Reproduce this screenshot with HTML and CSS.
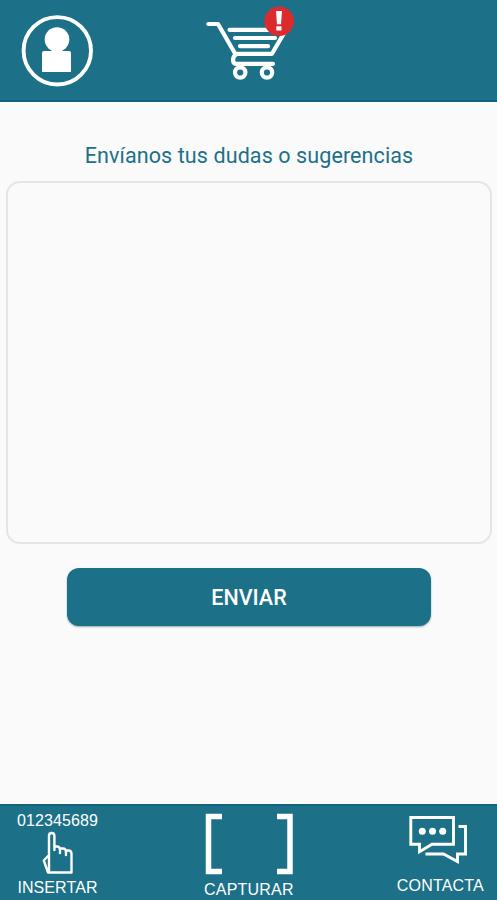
FILE: index.html
```html
<!DOCTYPE html>
<html lang="es">
<head>
<meta charset="utf-8">
<title>Contacta</title>
<link rel="stylesheet" href="styles.css">
</head>
<body>
<header class="topbar">
  <svg class="icon-user" width="72" height="72" viewBox="21 15 72 72">
    <circle cx="57.3" cy="50.8" r="33.700" fill="none" stroke="#fff" stroke-width="3.9"/>
    <circle cx="57" cy="39.5" r="12.3" fill="#fff"/>
    <path d="M52 48h10v3h7q2 0 2 2v19H42V53q0-2 2-2h8z" fill="#fff"/>
  </svg>
  <svg class="icon-cart" width="90" height="78" viewBox="205 5 90 78">
    <g fill="none" stroke="#fff" stroke-width="4.2" stroke-linecap="round" stroke-linejoin="round">
      <path d="M208.3 24H218L235.2 53.8H272L287 28"/>
      <path d="M229.5 29.8H275M235 38H275M240 46.2H268"/>
      <path d="M236 54.5C232 57 232 63.8 236.5 63.8H273"/>
      <circle cx="240.2" cy="72.5" r="5.2"/>
      <circle cx="267" cy="72.5" r="5.2"/>
    </g>
    <circle cx="279.2" cy="21.3" r="14.8" fill="#dc2a2e"/>
    <path d="M276 11h6l-1 13.2h-4zM276.3 26.2h5.2v4.4h-5.2z" fill="#fff"/>
  </svg>
</header>
<main class="content">
  <label class="prompt" for="message">Envíanos tus dudas o sugerencias</label>
  <textarea class="message" id="message"></textarea>
  <button class="send" type="button">ENVIAR</button>
</main>
<nav class="bottombar">
  <a class="tab tab-insert">
    <span class="label digits">012345689</span>
    <svg width="34" height="44" viewBox="41 831 34 44" fill="none" stroke="#fff" stroke-width="2.4" stroke-linejoin="round" stroke-linecap="round">
      <path d="M49 872.500V835.800Q49 833 51.700 833T54.400 835.800V850M54.400 846.500H57Q60 846.500 60 850V853M60 848.500H63Q66 848.500 66 852V855M66 850.500H68.500Q71.500 850.500 71.500 854V872.500H48L43.800 860.500L49 855"/>
    </svg>
    <span class="label">INSERTAR</span>
  </a>
  <a class="tab tab-capture">
    <svg width="88" height="62" viewBox="205 813 88 62" fill="none" stroke="#fff" stroke-width="5.500">
      <path d="M222 816.500H208.500V871.500H222M277 816.500H290V871.500H277"/>
    </svg>
    <span class="label">CAPTURAR</span>
  </a>
  <a class="tab tab-contact">
    <svg width="60" height="50" viewBox="409 815 60 50" fill="none" stroke="#fff" stroke-width="2.900">
      <path d="M411.800 817.500H454.500V844.300H433L420.500 851.800V844.300H411.800z"/>
      <path d="M459.500 826.500H466.500V854H458.500V861.500L444.500 854H426.500"/>
      <g fill="#fff" stroke="none"><circle cx="423.300" cy="831.300" r="3.500"/><circle cx="433.500" cy="831.300" r="3.500"/><circle cx="443.700" cy="831.300" r="3.500"/></g>
    </svg>
    <span class="label">CONTACTA</span>
  </a>
</nav>
</body>
</html>
```
FILE: styles.css
```css
* { box-sizing: border-box; }
body {
  margin: 0;
  height: 900px;
  display: flex;
  flex-direction: column;
  background: #fafafa;
  font-family: Roboto, sans-serif;
  overflow: hidden;
}
svg { display: block; flex: none; }
.topbar {
  height: 102px;
  flex: none;
  display: flex;
  align-items: flex-start;
  background: #1c7188;
  border-bottom: 2px solid #11637b;
}
.icon-user { margin: 15px 0 0 21px; }
.icon-cart { margin: 5px 0 0 112px; }
.content {
  flex: 1;
  display: flex;
  flex-direction: column;
  align-items: center;
  padding: 40px 5px 0 6px;
}
.prompt {
  height: 28px;
  line-height: 28px;
  font-size: 21.5px;
  letter-spacing: 0.1px;
  color: #1c7188;
  white-space: nowrap;
}
.message {
  width: 100%;
  height: 363px;
  margin-top: 11px;
  border: 2px solid #e5e5e5;
  border-radius: 14px;
  background: #fafafa;
  resize: none;
  outline: none;
}
.send {
  width: 364px;
  height: 58px;
  margin-top: 24px;
  padding: 0;
  border: 0;
  border-radius: 12px;
  background: #1c7188;
  box-shadow: 0 1px 2px rgba(0, 50, 70, 0.4);
  color: #fff;
  font: 500 21.5px/59px Roboto, sans-serif;
}
.bottombar {
  height: 96px;
  flex: none;
  display: flex;
  justify-content: space-between;
  padding: 0 13px 0 17px;
  background: #1c7188;
  border-top: 2px solid #11637b;
}
.tab {
  display: flex;
  flex-direction: column;
  align-items: center;
  color: #fff;
}
.label {
  font: 16px/18px "Liberation Sans", Arial, sans-serif;
}
.tab-insert { padding-top: 6px; }
.tab-insert svg { margin: 1px 0 4px; }
.tab-insert .label { letter-spacing: 0.1px; }
.tab-capture { padding-top: 7px; margin-left: 3px; }
.tab-capture .label { margin-top: 6px; letter-spacing: 0.2px; }
.tab-contact { padding-top: 9px; }
.tab-contact svg { margin-right: 4px; }
.tab-contact .label { margin-top: 12px; letter-spacing: 0.2px; }
```
